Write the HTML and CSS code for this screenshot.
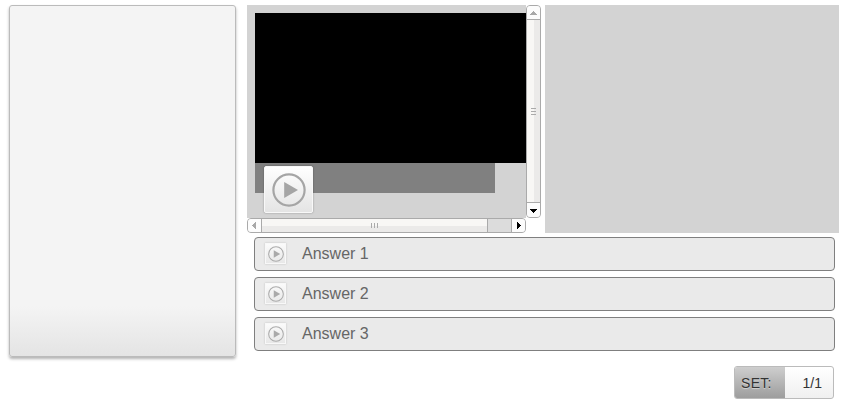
FILE: index.html
```html
<!DOCTYPE html>
<html lang="en">
<head>
<meta charset="utf-8">
<title>Quiz</title>
<link rel="stylesheet" href="styles.css">
</head>
<body>
<svg class="defs" width="0" height="0" aria-hidden="true">
  <symbol id="play" viewBox="0 0 34 34">
    <circle cx="17" cy="17" r="15.6" fill="none" stroke="currentColor" stroke-width="2.2"/>
    <path d="M12.2 9 26 17 12.2 25Z" fill="currentColor"/>
  </symbol>
</svg>
<div class="layout">
  <aside class="side"></aside>
  <main class="main">
    <div class="panes">
      <section class="viewer">
        <div class="view">
          <div class="video"></div>
          <div class="controls"><button class="play"><svg><use href="#play"/></svg></button></div>
        </div>
        <div class="vbar">
          <svg class="btn" viewBox="0 0 15 15" shape-rendering="crispEdges"><path d="M7 6h1v1H7zM6 7h3v1H6zM5 8h5v1H5zM4 9h7v1H4z" fill="#a8a8a8"/></svg>
          <div class="vthumb"><i></i><i></i><i></i></div>
          <svg class="btn" viewBox="0 0 15 15" shape-rendering="crispEdges"><path d="M4 6h7v1H4zM5 7h5v1H5zM6 8h3v1H6zM7 9h1v1H7z"/></svg>
        </div>
        <div class="hbar">
          <svg class="btn" viewBox="0 0 15 15" shape-rendering="crispEdges"><path d="M5 7h1v1H5zM6 6h1v3H6zM7 5h1v5H7zM8 4h1v7H8z" fill="#a8a8a8"/></svg>
          <div class="hthumb"><i></i><i></i><i></i></div>
          <div class="track"></div>
          <svg class="btn right" viewBox="0 0 15 15" shape-rendering="crispEdges"><path d="M6 4h1v7H6zM7 5h1v5H7zM8 6h1v3H8zM9 7h1v1H9z"/></svg>
        </div>
      </section>
      <section class="blank"></section>
    </div>
    <div class="answers">
      <div class="answer"><span class="mini"><svg><use href="#play"/></svg></span>Answer 1</div>
      <div class="answer"><span class="mini"><svg><use href="#play"/></svg></span>Answer 2</div>
      <div class="answer"><span class="mini"><svg><use href="#play"/></svg></span>Answer 3</div>
    </div>
    <div class="set"><span class="label">SET:</span><span class="count">1/1</span></div>
  </main>
</div>
</body>
</html>
```
FILE: styles.css
```css
* { box-sizing: border-box; }
body {
  margin: 0;
  background: #fff;
  font-family: "Liberation Sans", Arial, sans-serif;
  overflow: hidden;
}
svg { display: block; }
.defs { position: absolute; }
.layout { display: flex; gap: 11px; padding: 5px 3px 0 9px; }
.side {
  width: 227px;
  height: 352px;
  border: 1px solid #bbb;
  border-radius: 3px;
  background: linear-gradient(#f4f4f4 300px, #e4e4e4);
  box-shadow: 0 2px 3px rgba(0, 0, 0, .3);
}
.main { width: 592px; }
.panes { display: flex; gap: 4px; height: 228px; }
.viewer {
  width: 294px;
  display: grid;
  grid-template-columns: 279px 15px;
  grid-template-rows: 213px 15px;
}
.view { background: #d3d3d3; padding: 8px 0 0 8px; }
.video { height: 150px; background: #000; }
.controls { width: 240px; height: 30px; padding: 3px 0 0 9px; background: gray; }
.play {
  display: block;
  width: 49px;
  height: 47px;
  padding: 5px 7px;
  border: 1px solid #f8f8f8;
  border-radius: 2px;
  background: linear-gradient(#fff, #e4e4e4);
  box-shadow: 0 0 2px rgba(0, 0, 0, .35);
  color: #a5a5a5;
}
.play svg { width: 34px; height: 34px; }
.blank { width: 294px; background: #d3d3d3; }
.vbar, .hbar { display: flex; border: 1px solid #aaa; border-radius: 4px; background: #dcdcdc; overflow: hidden; }
.vbar { flex-direction: column; }
.btn { flex: none; width: 15px; height: 15px; margin: -1px; background: #fcfcfc; }
.right { background: linear-gradient(90deg, #aaa 1px, #fcfcfc 1px); }
.vthumb {
  flex: 1;
  margin-bottom: 1px;
  border: solid #aaa;
  border-width: 1px 0;
  background: linear-gradient(90deg, #f8f7f5 7px, #ebeae9 7px);
  display: flex;
  flex-direction: column;
  align-items: center;
  justify-content: center;
  gap: 2px;
}
.vthumb i { width: 5px; height: 1px; background: #aaa; }
.hthumb {
  width: 227px;
  border: solid #aaa;
  border-width: 0 1px;
  background: linear-gradient(#f8f7f5 7px, #ebeae9 7px);
  display: flex;
  align-items: center;
  justify-content: center;
  gap: 2px;
}
.hthumb i { width: 1px; height: 5px; background: #aaa; }
.track { flex: 1; }
.answers { display: flex; flex-direction: column; gap: 6px; padding: 4px 4px 0 7px; }
.answer {
  display: flex;
  align-items: center;
  height: 34px;
  padding: 0 0 1px 10px;
  border: 1px solid #7f7f7f;
  border-radius: 4px;
  background: #eaeaea;
  color: #666;
  font-size: 16px;
}
.mini {
  width: 21px;
  height: 21px;
  margin-right: 16px;
  padding: 2px;
  border: 1px solid #f8f8f8;
  background: linear-gradient(#fbfbfb, #e8e8e8);
  box-shadow: 0 0 2px rgba(0, 0, 0, .18);
  color: #aaa;
}
.mini svg { width: 16px; height: 16px; margin-left: -.5px; }
.set {
  display: flex;
  width: 100px;
  height: 33px;
  margin: 15px 0 0 487px;
  border: 1px solid #bbb;
  border-radius: 3px;
  background: linear-gradient(#fff, #f0f0f0);
  color: #333;
  font-size: 14px;
  line-height: 33px;
  overflow: hidden;
}
.label {
  width: 50px;
  padding-left: 6px;
  background: linear-gradient(#cecece, #9d9d9d);
  letter-spacing: .3px;
  text-shadow: 0 1px 1px rgba(255, 255, 255, .5);
}
.count { flex: 1; padding-right: 11px; text-align: right; }
```
